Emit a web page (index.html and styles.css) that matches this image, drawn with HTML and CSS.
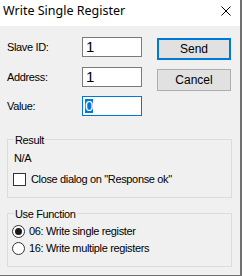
FILE: index.html
```html
<!DOCTYPE html>
<html>
<head>
<meta charset="utf-8">
<link rel="stylesheet" href="styles.css">
</head>
<body>
<div class="window">
  <div class="titlebar">
    <span class="title">Write Single Register</span>
    <svg class="close" width="10" height="10" viewBox="0 0 10 10"><path d="M0.5 0.5 L9.5 9.5 M9.5 0.5 L0.5 9.5" stroke="#000" stroke-width="1" fill="none"/></svg>
  </div>
  <div class="content">
    <div class="top">
      <div class="fields">
        <div class="row r1"><span class="label">Slave ID:</span><span class="input">1</span></div>
        <div class="row r2"><span class="label">Address:</span><span class="input">1</span></div>
        <div class="row r3"><span class="label">Value:</span><span class="input focus"><span class="sel">0</span></span></div>
      </div>
      <div class="buttons">
        <span class="btn primary">Send</span>
        <span class="btn">Cancel</span>
      </div>
    </div>
    <div class="group result">
      <span class="gtitle">Result</span>
      <div class="na">N/A</div>
      <div class="check"><span class="box"></span><span>Close dialog on "Response ok"</span></div>
    </div>
    <div class="group func">
      <span class="gtitle">Use Function</span>
      <div class="radio r-a"><span class="dot on"></span><span>06: Write single register</span></div>
      <div class="radio r-b"><span class="dot"></span><span>16: Write multiple registers</span></div>
    </div>
  </div>
</div>
</body>
</html>
```
FILE: styles.css
```css
html, body { margin: 0; padding: 0; background: #f0f0f0; }
.window {
  width: 242px; height: 276px; box-sizing: border-box;
  background: #f0f0f0;
  border-right: 2px solid #707070;
  border-bottom: 1px solid #707070;
  font-family: "Liberation Sans", Arial, sans-serif;
  font-size: 11px; line-height: 13px; color: #000;
  letter-spacing: -0.35px;
  overflow: hidden;
}
.titlebar {
  height: 26px; background: #fff;
  display: flex; align-items: center; justify-content: space-between;
  padding: 0 9px 0 3px;
  letter-spacing: 0;
}
.title { font-family: "Noto Sans", "Open Sans", sans-serif; font-size: 12.5px; line-height: 16px; margin-top: -4px; }
.close { margin-top: -4px; }
.content { padding: 11px 0 0 7px; }
.top { display: flex; }
.fields { display: flex; flex-direction: column; }
.row { display: flex; align-items: center; height: 20px; }
.r1 { margin-bottom: 10px; }
.r2 { margin-bottom: 9px; }
.label { width: 75px; padding-top: 1px; }
.input {
  width: 60px; height: 20px; box-sizing: border-box;
  border: 1px solid #7a7a7a; background: #fff;
  padding: 1px 0 0 3px; font-size: 15px; line-height: 16px;
  letter-spacing: 0;
}
.input.focus { border-color: #0078d7; padding-left: 2px; padding-top: 1px; }
.sel { background: #0078d7; color: #fff; display: inline-block; line-height: 14px; }
.buttons { display: flex; flex-direction: column; gap: 9px; margin-left: 15px; margin-top: 1px; }
.btn {
  width: 74px; height: 22px; box-sizing: border-box;
  background: #e1e1e1; border: 1px solid #adadad;
  display: flex; align-items: center; justify-content: center;
  font-size: 12px; letter-spacing: 0;
}
.btn.primary { border: 2px solid #0078d7; }
.group {
  width: 225px; box-sizing: border-box;
  border: 1px solid #dcdcdc;
  padding: 0 6px 11px 6px;
}
.result { margin-top: 23px; }
.gtitle { display: block; width: max-content; background: #f0f0f0; padding: 0 1px; margin-top: -6px; }
.na { margin-top: 5px; }
.check { display: flex; align-items: center; margin-top: 8px; margin-left: -1px; }
.box { width: 13px; height: 13px; box-sizing: border-box; border: 1px solid #333; background: #fff; margin-right: 5px; }
.func { margin-top: 15px; padding-bottom: 11px; }
.radio { display: flex; align-items: center; margin-left: -2px; }
.r-a { margin-top: 4px; }
.r-b { margin-top: 4px; }
.dot { width: 13px; height: 13px; box-sizing: border-box; border: 1px solid #333; border-radius: 50%; background: #fff; margin-right: 4px; position: relative; }
.dot.on::after { content: ""; position: absolute; left: 2px; top: 2px; width: 7px; height: 7px; border-radius: 50%; background: #1a1a1a; }
```
